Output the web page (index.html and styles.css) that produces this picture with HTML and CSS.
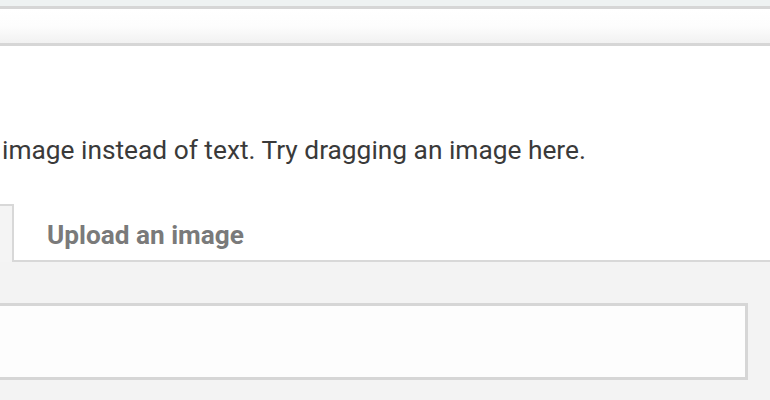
FILE: index.html
```html
<!DOCTYPE html>
<html>
<head>
<meta charset="utf-8">
<link rel="stylesheet" href="styles.css">
</head>
<body>
<div class="topband"></div>
<div class="toolbar"></div>
<main class="content">
  <p class="intro">image instead of text. Try dragging an image here.</p>
  <div class="tabs">
    <div class="tab tab-active"></div>
    <div class="tab tab-upload">Upload an image</div>
  </div>
  <div class="panel">
    <div class="field"></div>
  </div>
</main>
</body>
</html>
```
FILE: styles.css
```css
html, body {
  margin: 0;
  padding: 0;
  background: #ffffff;
  overflow: hidden;
}
body {
  width: 770px;
  height: 400px;
  font-family: Roboto, "Liberation Sans", sans-serif;
}
.topband {
  height: 6px;
  background: #eef2f2;
}
.toolbar {
  height: 34px;
  border-top: 3px solid #d6d6d6;
  border-bottom: 3px solid #d6d6d6;
  background: linear-gradient(to bottom, #ffffff 0%, #fdfdfd 50%, #f1f1f1 100%);
}
.content {
  display: flex;
  flex-direction: column;
}
.intro {
  margin: 89px 0 0 0;
  padding-left: 2px;
  font-size: 26.3px;
  line-height: 30px;
  color: #3a3a3a;
}
.tabs {
  display: flex;
  margin-top: 39px;
  height: 58px;
}
.tab {
  box-sizing: border-box;
}
.tab-active {
  width: 14px;
  background: #f4f4f4;
  border-top: 2px solid #d8d8d8;
  border-right: 2px solid #d8d8d8;
}
.tab-upload {
  flex: 1;
  background: #ffffff;
  border-bottom: 2px solid #d8d8d8;
  padding: 5px 0 0 33px;
  display: flex;
  align-items: center;
  font-weight: 700;
  font-size: 26.2px;
  color: #7a7a7a;
}
.panel {
  background: #f3f3f3;
  padding: 41px 22px 20px 0;
}
.field {
  height: 71px;
  background: #fdfdfd;
  border: 3px solid #d6d6d6;
  border-left: none;
}
```
